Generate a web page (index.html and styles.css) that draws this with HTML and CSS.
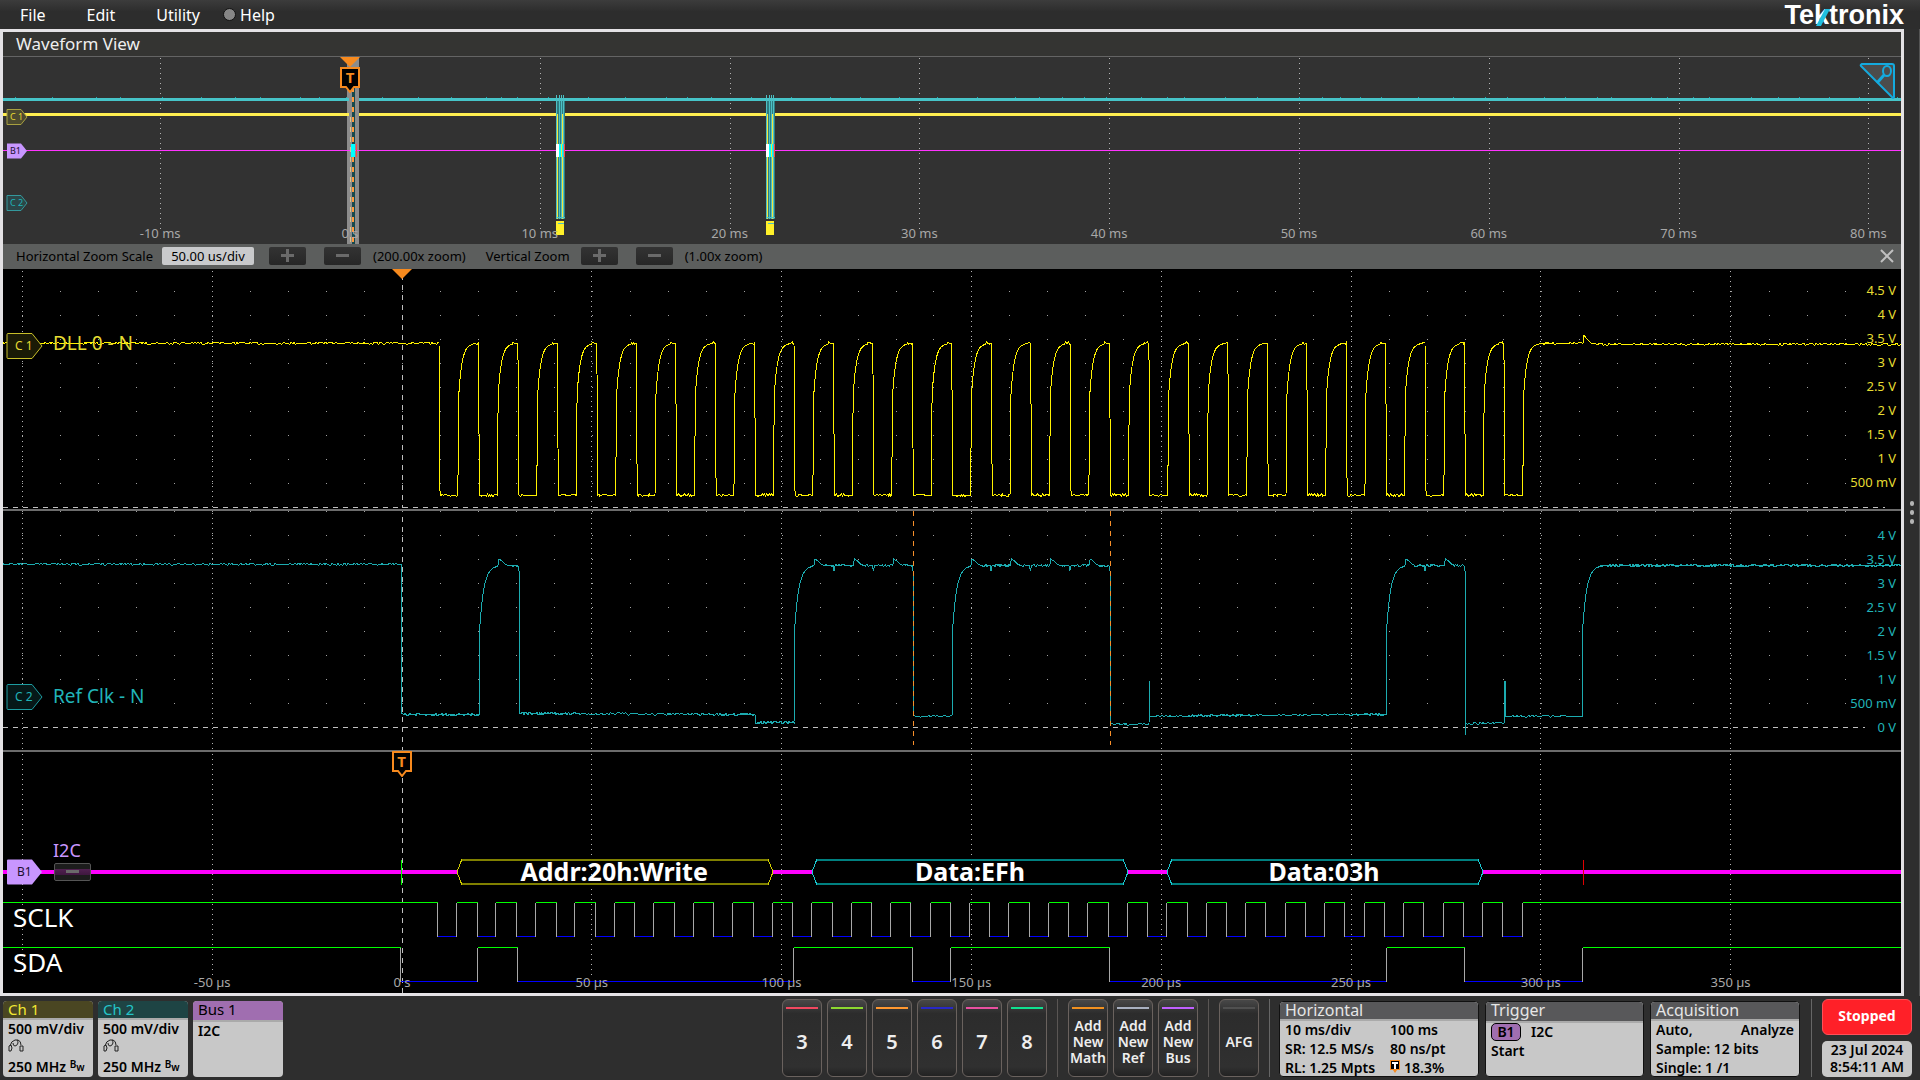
FILE: index.html
```html
<!DOCTYPE html>
<html lang="en">
<head>
<meta charset="utf-8">
<title>Waveform View</title>
<link rel="stylesheet" href="styles.css">
</head>
<body>
<header class="menubar">
  <nav class="menus">
    <button class="menu" type="button">File</button>
    <button class="menu" type="button">Edit</button>
    <button class="menu" type="button">Utility</button>
    <button class="menu help" type="button"><span class="led"></span>Help</button>
  </nav>
  <div class="logo">Tektronix<svg class="slash" viewBox="0 0 14 17"><path d="M9 0h5L5 17H0z"/></svg></div>
</header>

<div class="workspace">
<main class="view">
  <h1 class="view-title">Waveform View</h1>

  <section class="overview" aria-label="Record overview">
    <svg class="plot" id="overview" viewBox="0 0 1898 187" preserveAspectRatio="none"></svg>
    <div class="times" id="overview-times"></div>
    <div class="tag tag-s ch1 dim" style="top:32%"><svg viewBox="0 0 22 16"><path d="M1 .5h14l6 7.500-6 7.500H1z"/></svg><span>C 1</span></div>
    <div class="tag tag-s bus" style="top:50%"><svg viewBox="0 0 22 16"><path d="M1 .5h14l6 7.500-6 7.500H1z"/></svg><span>B1</span></div>
    <div class="tag tag-s ch2 dim" style="top:78%"><svg viewBox="0 0 22 16"><path d="M1 .5h14l6 7.500-6 7.500H1z"/></svg><span>C 2</span></div>
    <svg class="arrow" style="left:18.28%" viewBox="0 0 20 10"><path d="M0 0h20L10 10z"/></svg>
    <div class="trig filled" style="left:18.28%"><svg viewBox="0 0 20 26"><path d="M1 1h18v19h-5l-4 5-4-5H1z"/></svg><span>T</span></div>
    <button class="corner" type="button" aria-label="Toggle zoom"><svg viewBox="0 0 36 38"><path class="tri" d="M3 2h30q2 0 2 2v31q-1 2-2 0L2 4q-1-1 1-2z"/><ellipse cx="28" cy="9" rx="4" ry="5"/><path class="handle" d="M25 13l-7 8"/></svg></button>
  </section>

  <form class="zoombar">
    <label for="hscale">Horizontal Zoom Scale</label>
    <input id="hscale" type="text" value="50.00 us/div">
    <button class="step" type="button" aria-label="Increase horizontal zoom"><i class="plus"></i></button>
    <button class="step" type="button" aria-label="Decrease horizontal zoom"><i class="minus"></i></button>
    <span class="factor">(200.00x zoom)</span>
    <span class="vlabel">Vertical Zoom</span>
    <button class="step" type="button" aria-label="Increase vertical zoom"><i class="plus"></i></button>
    <button class="step" type="button" aria-label="Decrease vertical zoom"><i class="minus"></i></button>
    <span class="factor">(1.00x zoom)</span>
    <button class="close" type="button" aria-label="Close zoom"><svg viewBox="0 0 14 14"><path d="M1 1l12 12M13 1L1 13"/></svg></button>
  </form>

  <section class="slice slice-1" aria-label="Channel 1">
    <svg class="plot" id="slice1" viewBox="0 0 1898 240" preserveAspectRatio="none"></svg>
    <div class="volts ch1" id="volts1"></div>
    <svg class="arrow" style="left:21%" viewBox="0 0 20 10"><path d="M0 0h20L10 10z"/></svg>
    <div class="tag ch1" style="top:32%"><svg viewBox="0 0 37 27"><path d="M2 1h24l10 12.500-10 12.500H2q-1 0-1-1V2q0-1 1-1z"/></svg><span>C 1</span></div>
    <div class="name ch1" style="top:31%">DLL 0 - N</div>
  </section>
  <section class="slice slice-2" aria-label="Channel 2">
    <svg class="plot" id="slice2" viewBox="0 0 1898 239" preserveAspectRatio="none"></svg>
    <div class="volts ch2" id="volts2"></div>
    <div class="tag ch2" style="top:78%"><svg viewBox="0 0 37 27"><path d="M2 1h24l10 12.500-10 12.500H2q-1 0-1-1V2q0-1 1-1z"/></svg><span>C 2</span></div>
    <div class="name ch2" style="top:77.400%">Ref Clk - N</div>
  </section>
  <section class="slice slice-3" aria-label="Bus 1">
    <svg class="plot" id="slice3" viewBox="0 0 1898 241" preserveAspectRatio="none"></svg>
    <div class="times" id="times"></div>
    <div class="trig" style="left:21%"><svg viewBox="0 0 20 26"><path d="M1 1h18v19h-5l-4 5-4-5H1z"/></svg><span>T</span></div>
    <div class="tag bus" style="top:49.600%"><svg viewBox="0 0 37 27"><path d="M2 1h24l10 12.500-10 12.500H2q-1 0-1-1V2q0-1 1-1z"/></svg><span>B1</span></div>
    <div class="name bus" style="top:40.700%">I2C</div>
    <button class="collapse" type="button" aria-label="Collapse bus"><i class="minus"></i></button>
    <div class="packet" style="left:32.200%">Addr:20h:Write</div>
    <div class="packet" style="left:50.950%">Data:EFh</div>
    <div class="packet" style="left:69.600%">Data:03h</div>
    <div class="line-name" style="top:68.500%">SCLK</div>
    <div class="line-name" style="top:87.200%">SDA</div>
  </section>
</main>
<button class="drawer" type="button" aria-label="Open results bar"><i></i><i></i><i></i></button>
</div>

<footer class="settings">
  <div class="badges">
    <section class="card source ch1"><h2>Ch 1</h2><div class="body"><p>500 mV/div</p><p><svg class="probe" viewBox="0 0 16 14"><path d="M2 7q1-5 5-6h3q3 1 3 5M5 4q0 3 2 3t3-3q0-2-1-3M1 7l2-1 1 3-1 3H1zM12 7h3v5h-3z"/></svg></p><p>250 MHz <span class="bw"><span>B</span><span class="w">w</span></span></p></div></section>
    <section class="card source ch2"><h2>Ch 2</h2><div class="body"><p>500 mV/div</p><p><svg class="probe" viewBox="0 0 16 14"><path d="M2 7q1-5 5-6h3q3 1 3 5M5 4q0 3 2 3t3-3q0-2-1-3M1 7l2-1 1 3-1 3H1zM12 7h3v5h-3z"/></svg></p><p>250 MHz <span class="bw"><span>B</span><span class="w">w</span></span></p></div></section>
    <section class="card source bus1"><h2>Bus 1</h2><div class="body"><p>I2C</p></div></section>
  </div>
  <div class="keys">
    <button class="key c3" type="button">3</button>
    <button class="key c4" type="button">4</button>
    <button class="key c5" type="button">5</button>
    <button class="key c6" type="button">6</button>
    <button class="key c7" type="button">7</button>
    <button class="key c8" type="button">8</button>
  </div>
  <div class="keys ruled">
    <button class="key add math" type="button">Add<br>New<br>Math</button>
    <button class="key add ref" type="button">Add<br>New<br>Ref</button>
    <button class="key add bus-key" type="button">Add<br>New<br>Bus</button>
  </div>
  <div class="keys ruled">
    <button class="key add afg" type="button">AFG</button>
  </div>
  <div class="panels">
    <section class="card system horizontal"><h2>Horizontal</h2><div class="body pairs"><span>10 ms/div</span><span>100 ms</span><span>SR: 12.5 MS/s</span><span>80 ns/pt</span><span>RL: 1.25 Mpts</span><span><svg class="mini-t" viewBox="0 0 10 13"><path class="bg" d="M0 0h10v10H7l-2 3-2-3H0z"/><path class="in" d="M1 1h8v8H1z"/><path class="t" d="M2 3h6M5 3v6"/></svg>18.3%</span></div></section>
    <section class="card system trigger"><h2>Trigger</h2><div class="body"><p><span class="chip">B1</span>I2C</p><p>Start</p></div></section>
    <section class="card system acquisition"><h2>Acquisition</h2><div class="body"><p class="spread"><span>Auto,</span><span>Analyze</span></p><p>Sample: 12 bits</p><p>Single: 1 /1</p></div></section>
  </div>
  <div class="status">
    <button class="stopped" type="button">Stopped</button>
    <div class="clock">23 Jul 2024<br>8:54:11 AM</div>
  </div>
</footer>
<script src="script.js"></script>
</body>
</html>
```
FILE: styles.css
```css
* { box-sizing: border-box; }
body {
  margin: 0;
  min-height: 100vh;
  display: flex;
  flex-direction: column;
  background: #2e2e2e;
  color: #eee;
  font: 13px/18px "Noto Sans", sans-serif;
}
button, input { font: inherit; color: inherit; margin: 0; padding: 0; border: 0; background: none; }
h1, h2, p { margin: 0; }
h1, h2 { font-weight: 400; }

/* menu bar */
.menubar {
  height: 29px;
  display: flex;
  justify-content: space-between;
  align-items: center;
  padding: 0 16px 0 20px;
  background: linear-gradient(#3c3c3c, #2d2d2d 40%);
}
.menus { display: flex; gap: 41px; }
.menu { font-size: 16px; line-height: 26px; color: #fff; }
.help { display: flex; align-items: center; gap: 4px; margin-left: -18px; }
.led { width: 13px; height: 13px; border-radius: 50%; background: #868686; border: 1px solid #111; }
.logo { position: relative; font: bold 27px/28px "Liberation Sans", sans-serif; color: #fff; }
.slash { position: absolute; left: 32px; top: 8px; width: 14px; height: 17px; fill: #1fbfe0; }

/* waveform view */
.workspace { flex: 1; display: flex; }
.view {
  flex: 1;
  min-width: 0;
  display: flex;
  flex-direction: column;
  border: 3px solid #e4e2e5;
  background: #000;
}
.view-title {
  height: 25px;
  padding-left: 13px;
  font-size: 17px;
  line-height: 24px;
  background: #343432;
  border-bottom: 1px solid #646464;
}
.overview { position: relative; height: 187px; background: #323232; overflow: hidden; }
.plot { position: absolute; inset: 0; width: 100%; height: 100%; shape-rendering: crispEdges; }
.plot path { fill: none; vector-effect: non-scaling-stroke; }
.plot .zoom-box { fill: #8c8c8c; }
.grid { stroke: #b4b4b4; stroke-dasharray: 1 4; }
.dots { stroke: #a0a0a0; }
.zero { stroke: #c0c0c0; stroke-dasharray: 5 5; }
.cursor { stroke: #f78f2a; stroke-dasharray: 5 5; }
.wave1 { stroke: #fff200; }
.wave2 { stroke: #1cabb0; }
.hi { stroke: #0f0; }
.lo { stroke: #00f; }
.edge { stroke: #a8a8a8; }
.stop { stroke: #e00000; }
.idle { stroke: #f0f; stroke-width: 4px; }
.idle-thin { stroke: #f3f; }
.band1 { stroke: #ffee50; stroke-width: 3px; }
.band2 { stroke: #46c4c8; stroke-width: 3px; }
.rail-a { stroke: #808000; stroke-width: 2px; }
.rail-d { stroke: #008080; stroke-width: 2px; }
.tip-a { stroke: #d0cc00; }
.tip-d { stroke: #1cc8d0; }
.burst2 { stroke: #2f7c80; stroke-width: 9px; }
.burst2-line { stroke: #4cc0c4; }
.burst1-line { stroke: #f2e63c; }
.burst1-foot { stroke: #fff02a; stroke-width: 8px; }
.mark-w { stroke: #fff; stroke-width: 3px; }
.mark-c { stroke: #0ff; stroke-width: 4px; }
.mark-r { stroke: #f44; }
.trace-bg { stroke: #17494c; stroke-width: 3px; }
.trace-dash { stroke: #ff9a3c; stroke-width: 2px; stroke-dasharray: 5 5; }
.trace-side { stroke: #d8c890; stroke-dasharray: 5 5; }

.times span { position: absolute; bottom: 2px; transform: translateX(-50%); color: #a8a8a8; white-space: nowrap; }
.volts span { position: absolute; right: 5px; transform: translateY(-50%); white-space: nowrap; }
.ch1 { color: #e6dc32; }
.ch2 { color: #20b4b8; }
.bus { color: #c896ff; }

.tag { position: absolute; left: 3px; width: 37px; height: 27px; transform: translateY(-50%); }
.tag svg { display: block; width: 100%; height: 100%; fill: #1a1a06; stroke: #c8be28; }
.tag.ch2 svg { fill: #061818; stroke: #1c9ca0; }
.tag.bus svg { fill: #c896ff; stroke: none; }
.tag span { position: absolute; inset: 0; padding-left: 9px; font-size: 12px; line-height: 26px; }
.tag.bus span { color: #201030; padding-left: 11px; }
.tag-s { width: 22px; height: 16px; }
.tag-s span, .tag-s.bus span { padding-left: 4px; font-size: 9px; line-height: 15px; }
.tag-s.dim svg { fill: #4c4a30; stroke: #a8a040; }
.tag-s.ch2 svg { fill: #2c4648; stroke: #34989c; }
.name { position: absolute; left: 50px; transform: translateY(-50%); font-size: 19px; line-height: 24px; }
.name.bus { font-size: 18px; }
.arrow { position: absolute; top: 0; width: 20px; height: 10px; transform: translateX(-50%); fill: #f78a1e; }
.trig { position: absolute; top: -1px; width: 20px; height: 26px; transform: translateX(-50%); color: #f78a1e; }
.trig.filled { top: 10px; }
.trig svg { display: block; fill: #000; stroke: #f78a1e; stroke-width: 2px; }
.trig span { position: absolute; inset: 0; text-align: center; font-size: 15px; line-height: 20px; font-weight: 700; }
.corner { position: absolute; right: 6px; top: 5px; width: 36px; height: 38px; }
.corner svg { display: block; fill: none; stroke: #14aade; stroke-width: 2px; }
.corner .tri { fill: #4c4c4c; }
.corner .handle { stroke-width: 3px; }

/* zoom bar */
.zoombar {
  height: 25px;
  display: flex;
  align-items: center;
  padding: 0 7px 2px 13px;
  background: #5c5e5d;
  color: #000;
}
.zoombar input {
  width: 92px;
  height: 18px;
  margin: 0 15px 0 9px;
  border-radius: 2px;
  background: #c9cacc;
  text-align: center;
}
.step, .collapse {
  width: 37px;
  height: 18px;
  display: flex;
  align-items: center;
  justify-content: center;
  border-radius: 2px;
  background: linear-gradient(#333, #272727);
}
.step + .step { margin-left: 18px; }
.step + .factor { margin-left: 12px; }
.vlabel { margin: 0 11px 0 20px; }
.minus, .plus { position: relative; width: 13px; height: 3px; background: #6a6a6a; }
.plus::after { content: ""; position: absolute; left: 5px; top: -5px; width: 3px; height: 13px; background: #6a6a6a; }
.close { margin-left: auto; width: 14px; height: 14px; }
.close svg { display: block; stroke: #c0c0c0; stroke-width: 2px; }

/* zoomed slices */
.slice { position: relative; flex: 1 1 0; min-height: 160px; }
.slice-1 { flex-grow: 240; }
.slice-2 { flex-grow: 239; border-top: 2px solid #6c6c6c; }
.slice-3 { flex-grow: 241; border-top: 2px solid #6c6c6c; }
.packet {
  position: absolute;
  top: 49.2%;
  transform: translate(-50%, -50%);
  font-size: 25px;
  line-height: 26px;
  font-weight: 700;
  color: #fff;
  white-space: nowrap;
}
.line-name { position: absolute; left: 10px; transform: translateY(-50%); font-size: 26px; line-height: 30px; color: #fff; }
.collapse {
  position: absolute;
  left: 51px;
  top: 49.6%;
  transform: translateY(-50%);
  border: 1px solid #555;
  background: linear-gradient(#1c1c1c 33%, #502050 33%, #401840 66%, #1c1c1c 66%);
}

/* results drawer handle */
.drawer {
  width: 16px;
  display: flex;
  flex-direction: column;
  align-items: center;
  justify-content: center;
  gap: 4px;
  border-right: 1px solid #555;
}
.drawer i { width: 4px; height: 5px; border-radius: 2px; background: #b4b4b4; }

/* settings bar */
.settings { height: 84px; display: flex; padding: 3px 8px 3px 3px; line-height: 19px; }
.badges, .panels { display: flex; align-items: flex-end; }
.badges { flex: 1; gap: 5px; }
.panels { gap: 6px; padding: 0 11px 0 9px; border-left: 1px solid #666; }
.card { display: flex; flex-direction: column; height: 76px; border-radius: 4px; background: #c8c8c8; color: #000; }
.card h2 { height: 19px; padding-left: 5px; font-size: 15px; line-height: 17px; border-radius: 4px 4px 0 0; }
.card .body { flex: 1; border-top: 2px solid #aaa; padding: 0 5px; font-size: 14px; line-height: 18px; font-weight: 600; }
.card p { height: 19px; white-space: nowrap; }
.card.source { width: 90px; }
.card.ch1 h2 { background: #4a4622; color: #f0e832; }
.card.ch2 h2 { background: #1e4444; color: #24c4c8; }
.card.bus1 h2 { background: #a06eb0; }
.probe { width: 16px; height: 14px; display: block; fill: none; stroke: #222; }
.bw { display: inline-flex; font-size: 10px; line-height: 12px; vertical-align: top; }
.bw .w { padding-top: 3px; }
.card.system { border: 1px solid #111; }
.card.system h2 { background: #58585a; color: #e6e6e6; font-size: 16px; }
.horizontal { width: 200px; }
.trigger { width: 159px; }
.acquisition { width: 150px; }
.card .pairs { display: grid; grid-template-columns: 105px 1fr; grid-template-rows: 19px 19px 17px; white-space: nowrap; }
.mini-t { width: 10px; height: 13px; margin-right: 4px; }
.mini-t .bg { fill: #f78a1e; }
.mini-t .in { fill: #000; }
.mini-t .t { stroke: #fff; stroke-width: 2px; }
.chip { display: inline-block; width: 30px; height: 18px; line-height: 16px; margin-right: 10px; text-align: center; border: 1px solid #000; border-radius: 5px; background: #a06eb0; }
.spread { display: flex; justify-content: space-between; }
.keys { display: flex; gap: 5px; padding-right: 10px; }
.ruled { padding-left: 10px; border-left: 1px solid #5a5654; }
.key {
  position: relative;
  width: 40px;
  border: 1px solid #6a625e;
  border-radius: 6px;
  background: linear-gradient(#484848, #2c2c2c 18%, #303030 88%, #222);
  font-size: 20px;
  line-height: 24px;
  font-weight: 600;
  padding-top: 8px;
}
.key::before { content: ""; position: absolute; left: 3px; right: 3px; top: 7px; height: 2px; background: var(--tint); }
.add { font-size: 14px; line-height: 16px; }
.c3 { --tint: #f04860; }
.c4 { --tint: #8cd830; }
.c5 { --tint: #ff9830; }
.c6 { --tint: #2828c8; }
.c7 { --tint: #e850a0; }
.c8 { --tint: #10e090; }
.math { --tint: #f09020; }
.ref { --tint: #a8b0c0; }
.bus-key { --tint: #c060ff; }
.afg { --tint: #505050; }
.status { width: 101px; display: flex; flex-direction: column; gap: 6px; padding-left: 10px; border-left: 1px solid #666; font-weight: 600; }
.stopped { flex: 1; padding-bottom: 4px; border-radius: 6px; background: #ff2028; border: 1px solid #ff5058; color: #fff; font-size: 14px; font-weight: 700; }
.clock { height: 36px; border-radius: 5px; background: #c8c8c8; color: #000; font-size: 14px; line-height: 17px; text-align: center; white-space: nowrap; }
```
FILE: script.js
```js
const SVG = "http://www.w3.org/2000/svg";
const WIDTH = 1898;
const DIV = WIDTH / 10;      // one horizontal division
const ZERO = 399;            // trigger position in the zoomed view

function draw(id, cls, d) {
  const p = document.createElementNS(SVG, "path");
  p.setAttribute("class", cls);
  p.setAttribute("d", d);
  document.getElementById(id).append(p);
}

let seed = 7;
function noise(amount) {
  seed = (seed * 16807) % 2147483647;
  return Math.round((seed / 2147483647 - 0.5) * amount);
}

const toPath = pts => "M" + pts.map(p => p[0].toFixed(1) + " " + p[1].toFixed(1)).join("L");

function flat(pts, x0, x1, y0, y1 = y0) {
  for (let x = x0; x < x1; x += 1) pts.push([x, y0 + (y1 - y0) * (x - x0) / (x1 - x0) + noise(1.9)]);
  pts.push([x1, y1]);
}

function addSpan(parent, text, prop, percent) {
  const s = document.createElement("span");
  s.textContent = text;
  s.style[prop] = percent.toFixed(2) + "%";
  document.getElementById(parent).append(s);
}

/* ---- graticules ---- */
const majors = [];
for (let k = -2; k <= 7; k++) majors.push(ZERO + k * DIV);

function graticule(id, height, rows) {
  draw(id, "grid", majors.filter(x => x !== ZERO).map(x => `M${x} 2V${height}`).join(""));
  let d = "";
  for (const y of rows)
    for (let x = ZERO - 2 * DIV; x < 1860; x += DIV / 5) d += `M${x.toFixed(1)} ${y}h1`;
  if (d) draw(id, "dots", d);
}

graticule("slice1", 240, [22.5, 46.5, 70.5, 94.5, 118.5, 142.5, 166.5, 190.5, 214.5]);
graticule("slice2", 239, [0.5, 24.5, 48.5, 72.5, 96.5, 120.5, 144.5, 168.5, 192.5]);
graticule("slice3", 226, []);
draw("slice1", "zero", "M0 238.5H1882");
draw("slice2", "zero", "M0 216.5H1862");
for (const [id, h] of [["slice1", 239], ["slice2", 239], ["slice3", 241]])
  draw(id, "zero", `M${ZERO + 0.5} 6V${h}`);

/* ---- channel 1: clock ---- */
const ch1 = [];
flat(ch1, 0, 436, 74);
for (let k = 0; k < 28; k++) {
  const fall = 436 + 39.44 * k, rise = fall + 18.8;
  const next = k < 27 ? fall + 39.4 : 1898;
  ch1.push([fall, 74], [fall + 1, 222]);
  ch1.push([fall + 1, 226]);
  flat(ch1, fall + 2, rise, 226);
  ch1.push([rise + 0.5, 180]);
  for (let t = 1; t < 16; t++) ch1.push([rise + t, 74.5 + 68 * Math.exp(-t / 3.4)]);
  if (k < 27) flat(ch1, rise + 16, next, 74);
}
flat(ch1, 1538, 1580, 74.5, 74);
ch1.push([1580, 74], [1581, 66], [1584, 70], [1588, 74]);
flat(ch1, 1590, 1898, 75);
draw("slice1", "wave1", toPath(ch1));

/* ---- channel 2: data ---- */
const ch2 = [];
const top2 = 54.5;
function rise2(x, low) {
  ch2.push([x, low], [x + 0.5, 174]);
  for (let t = 1; t < 19; t++) ch2.push([x + t, top2 + 75 * Math.exp(-t / 4.2)]);
}
function bump(x) { ch2.push([x, 54], [x + 1, 48], [x + 4, 50], [x + 7, 53], [x + 9, 54]); }
function dip(x) { ch2.push([x, 54], [x + 1, 60], [x + 2, 55]); }
function ripple(start, count, end) {
  let x = start;
  for (let i = 0; i < count; i++) {
    bump(x);
    const last = i === count - 1;
    flat(ch2, x + 10, last ? end : x + 19, 54.5);
    if (!last) { dip(x + 19); flat(ch2, x + 22, x + 39, 54.5); }
    x += 39.4;
  }
}
flat(ch2, 0, 398, 53);
ch2.push([398.5, 54], [398.5, 202]);
flat(ch2, 401, 476, 203.5);
rise2(476, 203);
ripple(495, 1, 515);
ch2.push([516, 60], [516, 202]);
flat(ch2, 518, 752, 202.5, 203.5);
flat(ch2, 753, 791, 211.5);
rise2(791, 211);
ripple(811, 3, 909);
ch2.push([910, 60], [910.5, 204]);
flat(ch2, 912, 949, 205);
rise2(949, 205);
ripple(968, 4, 1106);
ch2.push([1107, 60], [1107, 212]);
flat(ch2, 1108, 1146, 213);
ch2.push([1146.5, 170], [1147, 205]);
flat(ch2, 1148, 1383, 205, 203.5);
rise2(1383, 204);
ripple(1402, 2, 1461);
ch2.push([1462, 60], [1462, 224], [1462, 212]);
flat(ch2, 1463, 1501, 212);
ch2.push([1502, 170], [1502.5, 205]);
flat(ch2, 1503, 1579, 205);
rise2(1579, 204);
flat(ch2, 1598, 1898, 54.5);
draw("slice2", "wave2", toPath(ch2));
draw("slice2", "cursor", "M910.5 0V234M1107.5 0V234");

/* ---- voltage scales ---- */
["4.5 V", "4 V", "3.5 V", "3 V", "2.5 V", "2 V", "1.5 V", "1 V", "500 mV"]
  .forEach((t, i) => addSpan("volts1", t, "top", (21 + 24 * i) / 2.4));
["4 V", "3.5 V", "3 V", "2.5 V", "2 V", "1.5 V", "1 V", "500 mV", "0 V"]
  .forEach((t, i) => addSpan("volts2", t, "top", (24 + 24 * i) / 2.39));

/* ---- bus packets ---- */
draw("slice3", "idle", "M0 120H454M770 120H809M1125 120H1164M1480 120H1898");
[["a", 454, 770], ["d", 809, 1125], ["d", 1164, 1480]].forEach(([k, a, b]) => {
  draw("slice3", "rail-" + k, `M${a + 5} 108H${b - 5}M${a + 5} 132H${b - 5}`);
  draw("slice3", "tip-" + k, `M${a + 5} 107L${a} 120L${a + 5} 133M${b - 5} 107L${b} 120L${b - 5} 133`);
});
draw("slice3", "hi", "M398.500 108V133");
draw("slice3", "stop", "M1580.500 108V133");

/* ---- decoded digital lines: alternating edges, starting high ---- */
function digital(edges, high, low) {
  let hi = "", lo = "", v = "", x = 0, up = true;
  for (const e of [...edges, WIDTH]) {
    if (up) hi += `M${x} ${high}H${e}`; else lo += `M${x} ${low}H${e}`;
    if (e !== WIDTH) v += `M${e} ${high}V${low}`;
    x = e; up = !up;
  }
  draw("slice3", "lo", lo);
  draw("slice3", "edge", v);
  draw("slice3", "hi", hi);
}
const clock = [];
for (let k = 0; k < 28; k++)
  clock.push(Math.round(434.2 + 39.44 * k) + 0.5, Math.round(452.9 + 39.47 * k) + 0.5);
digital(clock, 150.5, 184.5);
digital([397.5, 474.5, 514.5, 790.5, 909.5, 947.5, 1106.5, 1383.5, 1461.5, 1579.5], 195.5, 229.5);

majors.slice(1).forEach((x, i) => {
  const t = (i - 1) * 50;
  addSpan("times", t === 0 ? "0 s" : t + " µs", "left", x / WIDTH * 100);
});

/* ---- record overview ---- */
const ov = "overview";
draw(ov, "zoom-box", "M344 0H356V187H344z");
for (let k = -1; k <= 8; k++) {
  const x = 347.5 + k * DIV;
  if (k) draw(ov, "grid", `M${x} 1V172`);
  addSpan("overview-times", k ? k * 10 + " ms" : "0 s", "left", (x - 0.5) / WIDTH * 100);
}
draw(ov, "band2", "M0 42.500H346M356 42.500H1898");
draw(ov, "band1", "M0 57.500H346M356 57.500H1898");
draw(ov, "idle-thin", "M0 93.500H1898");
let specks = "";
for (let x = 12; x < 1895; x += 14 + Math.abs(noise(60))) specks += `M${x} 40.500h1`;
draw(ov, "wave2", specks);
draw(ov, "trace-bg", "M350 30V187");
draw(ov, "trace-side", "M347.500 60V187");
draw(ov, "trace-dash", "M350 30V187");
draw(ov, "mark-c", "M350 87V100");
draw(ov, "mark-r", "M353.500 87V100");
for (const x of [553, 763]) {
  draw(ov, "burst2", `M${x + 4.5} 44V162`);
  draw(ov, "burst2-line", `M${x + 0.5} 38V162M${x + 3.5} 38V162M${x + 5.5} 38V162M${x + 7.5} 38V162`);
  draw(ov, "burst1-line", `M${x + 1.5} 57V162M${x + 6.5} 57V162`);
  draw(ov, "burst1-foot", `M${x + 4} 164V178`);
  draw(ov, "burst2-line", `M${x} 160.500h9M${x + 2} 166.500h6`);
  draw(ov, "mark-w", `M${x + 1.5} 87V100`);
  draw(ov, "mark-c", `M${x + 5} 87V100`);
  draw(ov, "mark-r", `M${x + 8.5} 87V100`);
  draw(ov, "burst1-line", `M${x + 5.5} 87V100`);
}
```
